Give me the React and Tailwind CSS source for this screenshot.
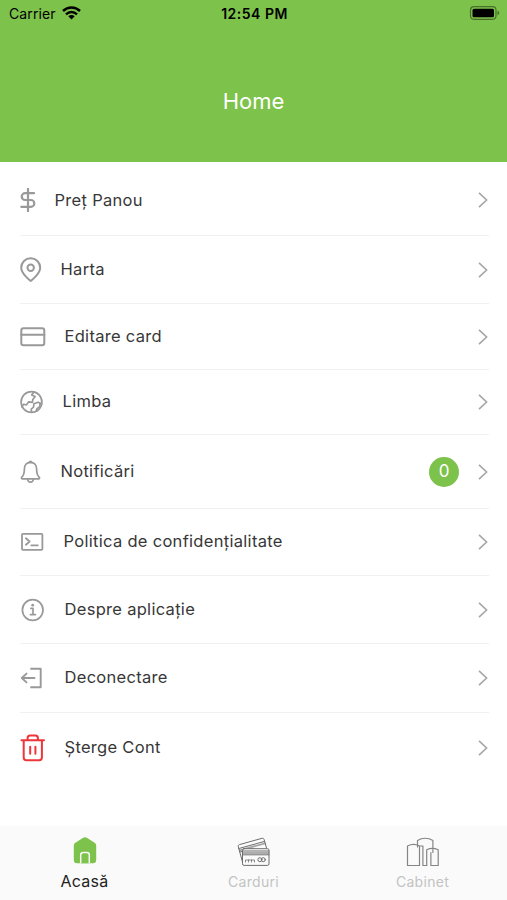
import React from "react";

const iconProps = {
  fill: "none",
  stroke: "currentColor",
  strokeWidth: 2,
  strokeLinecap: "round",
  strokeLinejoin: "round",
  className: "block shrink-0",
};

const DollarIcon = () => (
  <svg {...iconProps} strokeWidth="2.200" width="16" height="24" viewBox="0 0 16 24">
    <path d="M8 1v22M14 5.200H5.100a3.400 3.400 0 0 0 0 6.800h5.800a3.400 3.400 0 0 1 0 6.800H1.300" />
  </svg>
);

const PinIcon = () => (
  <svg {...iconProps} width="22" height="26" viewBox="0 0 22 26">
    <path d="M20.200 10.700c0 6-9.500 13.300-9.500 13.300S1.200 16.700 1.200 10.700a9.500 9.500 0 0 1 19 0z" />
    <circle cx="10.700" cy="10.800" r="3.200" />
  </svg>
);

const CardIcon = () => (
  <svg {...iconProps} width="26" height="20" viewBox="0 0 26 20">
    <rect x="1.300" y="1.300" width="23" height="17" rx="2.200" />
    <path d="M1.300 7.800h23" />
  </svg>
);

const GlobeIcon = () => (
  <svg {...iconProps} strokeWidth="1.700" width="24" height="24" viewBox="0 0 24 24">
    <circle cx="11.500" cy="12" r="10.400" />
    <path d="M14 2l-2.300 2.900 3.400 1.600-2.300 3.100-.4 2.700-3.700-.5-2.400 3.200-2.500-.8-2 2.600" />
    <path d="M21.700 14.200l-3.500-2-4.300 1.600-.3 3.200-2.300 2.200.1 3" />
    <path d="M20.300 13.300l-.8 3.600-2.600 1.700-.6 2.400" />
  </svg>
);

const BellIcon = () => (
  <svg {...iconProps} strokeWidth="1.700" width="22" height="24" viewBox="0 0 22 24">
    <path d="M10.500 2.300c-4.100 0-6.100 3-6.100 6.600 0 5.500-1.300 7-2.700 8.400-.5.600-.2 1.600.8 1.600h16c1 0 1.300-1 .8-1.600-1.400-1.400-2.700-2.900-2.700-8.400 0-3.600-2-6.600-6.100-6.600z" />
    <path d="M9.500 1.700h2M7.700 19.500c.2 1.600 1.200 2.600 2.800 2.600s2.600-1 2.800-2.600" />
  </svg>
);

const TerminalIcon = () => (
  <svg {...iconProps} strokeWidth="1.800" width="25" height="20" viewBox="0 0 25 20">
    <rect x="2" y="1.800" width="20.400" height="16" rx="1" />
    <path d="M5.900 6.300l3.700 3.200-3.700 3.200M11.300 13.300h6.500" />
  </svg>
);

const InfoIcon = () => (
  <svg {...iconProps} strokeWidth="1.700" width="26" height="24" viewBox="0 0 26 24">
    <circle cx="12.700" cy="12" r="10.300" />
    <path d="M10.900 10.400h2.100v6M10.400 16.600h5" />
    <circle cx="12.700" cy="7.200" r="1.400" fill="currentColor" stroke="none" />
  </svg>
);

const LogoutIcon = () => (
  <svg {...iconProps} strokeWidth="1.900" width="26" height="24" viewBox="0 0 26 24">
    <path strokeLinecap="butt" d="M10.300 2.700h10.400v18.600H10.300" />
    <path d="M14.500 12H1.800M6.500 7.600L1.800 12l4.700 4.400" />
  </svg>
);

const TrashIcon = () => (
  <svg {...iconProps} className="block shrink-0 text-[#ee3539]" width="26" height="28" viewBox="0 0 26 28">
    <path d="M1.500 6.200h22.500M3.700 6.200v17.300c0 1.700 1 2.700 2.700 2.700h12.800c1.700 0 2.700-1 2.700-2.700V6.200M7.600 5.800V4c0-1.600 1-2.500 2.500-2.500h5.300c1.500 0 2.500.9 2.500 2.500v1.800" />
    <path d="M10.200 12.800v7M15.400 12.800v7" />
  </svg>
);

const HomeIcon = () => (
  <svg width="24" height="27" viewBox="0 0 24 27" className="block">
    <path
      fill="#7dc24b"
      d="M10.200.8a3.500 3.500 0 0 1 3.600 0l7.800 5c1 .7 1.600 1.700 1.600 2.900v14.200c0 2-1.200 3.300-3.200 3.300H4c-2 0-3.200-1.300-3.200-3.300V8.700c0-1.200.6-2.200 1.600-2.900z"
    />
    <path fill="#7dc24b" stroke="#fafafa" strokeWidth="1.500" d="M7.700 26.200v-8.200c0-1.500 1-2.400 2.500-2.400h3.600c1.500 0 2.500.9 2.500 2.400v8.200" />
  </svg>
);

const CardsIcon = () => (
  <svg {...iconProps} className="block text-[#6e6e6e]" strokeWidth="1" width="34" height="30" viewBox="0 0 34 30">
    <path d="M5.500 25L1.300 9.700c-.3-1 .2-1.800 1.200-2.100L25 1.300c1-.3 1.800.2 2.100 1.200l2.500 8.800" />
    <path d="M2 11.500l25.500-7.100M3 15l12.800-3.600" />
    <path strokeWidth="1.800" strokeOpacity=".6" d="M2.700 13.300L28 6.300" />
    <rect x="5.500" y="11.700" width="26.500" height="16.700" rx="1.600" fill="#fafafa" />
    <path d="M5.500 14h26.500M5.500 17.800h26.500" />
    <path strokeWidth="2" strokeOpacity=".55" d="M6 15.900h25.500" />
    <path strokeWidth=".8" d="M8.500 25v-2h9v2M11.500 23v2M14.500 23v2" />
    <circle cx="22.900" cy="22.700" r="2" />
    <circle cx="26.300" cy="22.700" r="2" />
  </svg>
);

const BuildingsIcon = () => (
  <svg {...iconProps} className="block text-[#858585]" strokeWidth="1.200" width="34" height="30" viewBox="0 0 34 30">
    <path d="M1.500 28.500V9c3.500-1.800 8.500-1.800 12 0v19.500z" />
    <path d="M11.500 10V3.500c4.600-2.900 10.800-2.900 15.400 0v12M13.500 9h3.400v19.500h3.800" />
    <path d="M20.700 28.500V12.700c3.500-1.500 8-1.500 11.500 0v15.800h-7.300V15.500" />
  </svg>
);

const menu = [
  { label: "Preț Panou", Icon: DollarIcon, row: "h-[74px] pt-[3px]" },
  { label: "Harta", Icon: PinIcon, row: "h-[68px]", text: "mb-px" },
  { label: "Editare card", Icon: CardIcon, row: "h-[66px]" },
  { label: "Limba", Icon: GlobeIcon, row: "h-[65px]", text: "mb-px" },
  { label: "Notificări", Icon: BellIcon, row: "h-[74px]", count: 0 },
  { label: "Politica de confidențialitate", Icon: TerminalIcon, row: "h-[67px]", text: "mb-px" },
  { label: "Despre aplicație", Icon: InfoIcon, row: "h-[68px]" },
  { label: "Deconectare", Icon: LogoutIcon, row: "h-[69px] pb-px", text: "mb-px" },
  { label: "Șterge Cont", Icon: TrashIcon, row: "h-[70px] border-transparent" },
];

function StatusBar() {
  return (
    <div className="grid h-[26px] grid-cols-3 items-center pr-[7px] pl-[9px] text-black">
      <div className="flex items-center gap-1.5 text-[14px]">
        <span className="tracking-[0.1px]">Carrier</span>
        <svg width="19" height="14" viewBox="0 0 19 14" fill="none" stroke="currentColor" strokeWidth="2.500">
          <path d="M1 5c4.800-4.600 12.200-4.600 17 0M4 8.300c3.200-3 7.800-3 11 0" />
          <path fill="currentColor" stroke="none" d="M9.500 13.600l-3.200-3.300c1.900-1.700 4.500-1.700 6.400 0z" />
        </svg>
      </div>
      <div className="text-center text-[14px] font-semibold tracking-[0.5px]">12:54 PM</div>
      <svg width="31" height="14" viewBox="0 0 31 14" className="justify-self-end">
        <rect x="1.500" y=".7" width="25.500" height="12.600" rx="3.500" fill="none" stroke="#000" strokeOpacity=".42" strokeWidth="1.200" />
        <rect x="3.500" y="2.700" width="21.500" height="8.600" rx="1.500" fill="#000" />
        <path d="M28.500 4.800c2.200.7 2.200 3.700 0 4.400z" fill="#000" fillOpacity=".45" />
      </svg>
    </div>
  );
}

function MenuRow({ label, Icon, row, text = "", count }) {
  return (
    <li className={`flex items-center border-b border-[#f0f0f0] text-[#999] ${row}`}>
      <Icon />
      <span className={`ml-[18.5px] text-[16.5px] tracking-[0.3px] text-[#373737] ${text}`}>{label}</span>
      <div className="mr-px ml-auto flex items-center gap-[19px]">
        {count !== undefined && (
          <span className="flex h-[30px] w-[30px] items-center justify-center rounded-full bg-[#7dc24b] text-[17px] text-white">
            {count}
          </span>
        )}
        <svg width="10" height="16" viewBox="0 0 10 16" fill="none" stroke="#a6a6a6" strokeWidth="1.600">
          <path d="M1 .8L8.600 8 1 15.200" />
        </svg>
      </div>
    </li>
  );
}

export default function App() {
  return (
    <div className="flex h-[900px] w-[507px] flex-col bg-white font-['Inter','Liberation_Sans',sans-serif]">
      <header className="h-[162px] bg-[#7dc24b]">
        <StatusBar />
        <h1 className="pt-[59px] text-center text-[22px] leading-8 text-white">Home</h1>
      </header>

      <ul className="flex-1 pr-[18px] pl-[20px]">
        {menu.map((item) => (
          <MenuRow key={item.label} {...item} />
        ))}
      </ul>

      <nav className="grid h-[74px] grid-cols-3 bg-[#fafafa] text-center text-[#c3c3c3]">
        <div className="flex flex-col items-center pt-[11px]">
          <HomeIcon />
          <span className="mt-[5px] text-[16px] leading-6 tracking-[0.3px] text-[#222]">Acasă</span>
        </div>
        <div className="flex flex-col items-center pt-[11px]">
          <CardsIcon />
          <span className="mt-[3px] text-[14px] leading-6 tracking-[0.3px]">Carduri</span>
        </div>
        <div className="flex flex-col items-center pt-[11px]">
          <BuildingsIcon />
          <span className="mt-[3px] text-[14px] leading-6 tracking-[0.3px]">Cabinet</span>
        </div>
      </nav>
    </div>
  );
}
